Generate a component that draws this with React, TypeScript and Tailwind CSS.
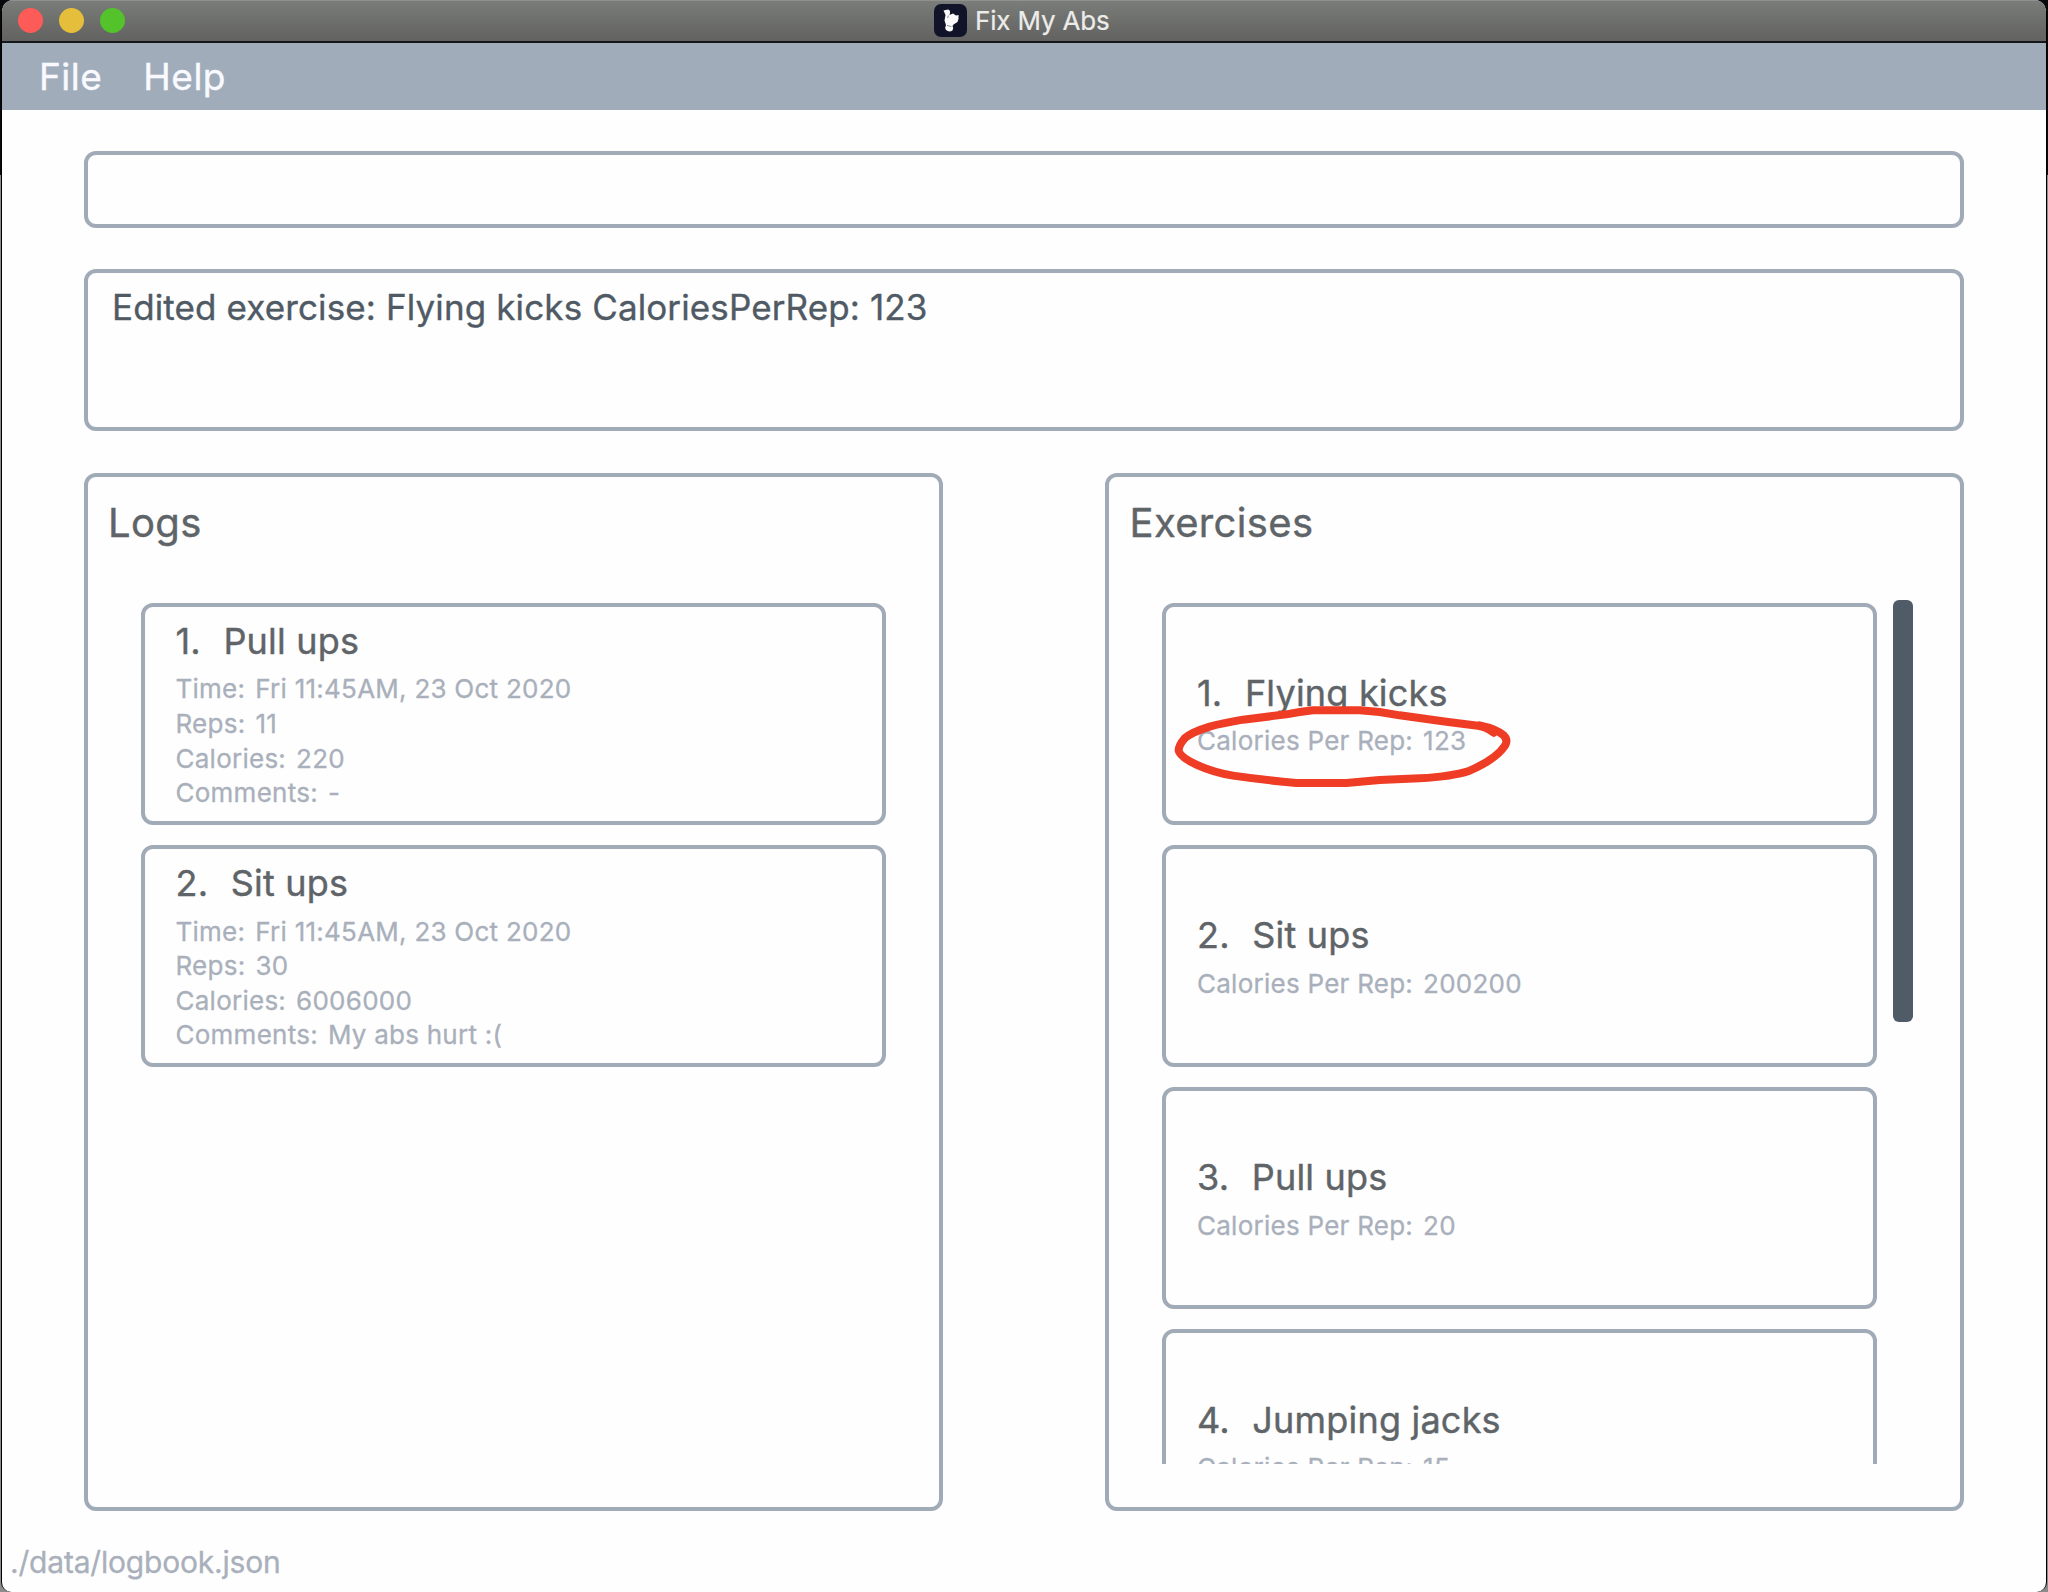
const logs = [
  {
    name: "Pull ups",
    details: [
      ["Time:", "Fri 11:45AM, 23 Oct 2020"],
      ["Reps:", "11"],
      ["Calories:", "220"],
      ["Comments:", "-"],
    ],
  },
  {
    name: "Sit ups",
    details: [
      ["Time:", "Fri 11:45AM, 23 Oct 2020"],
      ["Reps:", "30"],
      ["Calories:", "6006000"],
      ["Comments:", "My abs hurt :("],
    ],
  },
];

const exercises = [
  { name: "Flying kicks", details: [["Calories Per Rep:", "123"]] },
  { name: "Sit ups", details: [["Calories Per Rep:", "200200"]] },
  { name: "Pull ups", details: [["Calories Per Rep:", "20"]] },
  { name: "Jumping jacks", details: [["Calories Per Rep:", "15"]] },
];

function Card({ index, name, details }: { index: number; name: string; details: string[][] }) {
  return (
    <div className="mb-[20.33px] flex h-[222px] shrink-0 flex-col justify-center rounded-[12px] border-4 border-[#a0abb7] pt-[2.5px] pl-[31px] whitespace-nowrap">
      <div className="mb-[9.5px] flex h-[44px] gap-[22.5px] text-[36px] leading-[44px] tracking-[0.2px] text-[#5f6468] [-webkit-text-stroke:0.4px]">
        <span>{index}.</span>
        <span>{name}</span>
      </div>
      {details.map(([label, value]) => (
        <div key={label} className="flex gap-[10px] text-[26px] leading-[34.6px] tracking-[0.25px] text-[#a9b0bb] [-webkit-text-stroke:0.3px]">
          <span>{label}</span>
          <span>{value}</span>
        </div>
      ))}
    </div>
  );
}

/* Hand-drawn loop around the first exercise's calories */
function RedLoop() {
  return (
    <svg className="overflow-visible" width="340" height="83.33" viewBox="220 700 1020 250" fill="none">
      <path
        d="M1182 786 Q1160 768 1135 765 L1040 753 L900 734 Q840 722 780 719 L640 719 Q600 724 560 731 L430 747 Q370 757 330 768 Q275 785 255 803 Q236 825 237 840 Q240 858 290 882 Q340 905 400 915 Q490 928 590 937 L740 937 L840 928 L960 923 Q1060 917 1110 900 Q1190 865 1216 825 Q1226 808 1212 794 Q1190 774 1140 764"
        stroke="#ee3c25"
        strokeWidth="24"
        strokeLinecap="round"
        strokeLinejoin="round"
      />
    </svg>
  );
}

export default function App() {
  return (
    <div className="h-[1592px] w-[2048px] overflow-hidden bg-[linear-gradient(#08090c_175px,#8c8c8c_175px)] px-px font-['Inter',sans-serif]">
      <div className="flex h-[1592px] flex-col overflow-hidden rounded-t-[12px] rounded-b-[10px] border-x border-black bg-[#fefefe]">
        <div className="flex h-[43px] shrink-0 items-center border-b-2 border-[#16171c] bg-linear-to-b from-[#7a7d79] to-[#626260] shadow-[inset_0_1px_0_#8f918e]">
          <div className="ml-[16px] flex gap-[16px]">
            <span className="size-[25px] rounded-full bg-[#fc5b57]" />
            <span className="size-[25px] rounded-full bg-[#e5bf3c]" />
            <span className="size-[25px] rounded-full bg-[#53c22b]" />
          </div>
          <div className="ml-[809px] flex items-center gap-[8px]">
            <svg width="33" height="33" viewBox="0 0 33 33">
              <rect width="33" height="33" rx="7" fill="#111428" />
              <path
                d="M9.5 6.5 L14 5.5 Q16.5 6 16 9 L15.5 11 L19 9.5 L22 11.5 L24.5 11 Q25 15 23.5 18 L19.5 20.5 L18.5 22 Q20 24 18.5 26.5 Q15 28.5 12 26 Q10.5 23.5 12 21 L10.5 16.5 L11.5 11 Z"
                fill="#fafafa"
              />
              <path d="M13 21.5 L17.5 22.5 M14.5 11.5 L13.5 14" stroke="#8b8d99" strokeWidth="1" />
            </svg>
            <span className="pt-px text-[26px] leading-[40px] tracking-[-0.17px] whitespace-nowrap text-[#ececea] [-webkit-text-stroke:0.2px]">Fix My Abs</span>
          </div>
        </div>

        <div className="flex h-[66.5px] shrink-0 items-center gap-[41px] bg-[#a0acba] pl-[37px] text-[37px] tracking-[0.5px] text-[#f8faff] [-webkit-text-stroke:0.4px]">
          <span>File</span>
          <span>Help</span>
        </div>

        <div className="flex flex-col px-[82px] pt-[41.5px]">
          <div className="h-[77px] rounded-[12px] border-4 border-[#a0abb7]" />
          <div className="mt-[41px] h-[162px] rounded-[12px] border-4 border-[#a0abb7] pt-[12px] pl-[24px] text-[35px] leading-[44px] tracking-[0.12px] whitespace-nowrap text-[#4f5a65] [-webkit-text-stroke:0.35px]">
            Edited exercise: Flying kicks CaloriesPerRep: 123
          </div>

          <div className="mt-[41.5px] flex h-[1038px] justify-between">
            <section className="flex w-[858.5px] flex-col rounded-[12px] border-4 border-[#a0abb7] pt-[22px]">
              <h2 className="pl-[20px] text-[40px] leading-[48px] tracking-[0.35px] text-[#5f6468] [-webkit-text-stroke:0.4px]">Logs</h2>
              <div className="mt-[56px] flex flex-col pr-[53px] pl-[52.5px]">
                {logs.map((l, i) => (
                  <Card key={l.name} index={i + 1} {...l} />
                ))}
              </div>
            </section>

            <section className="flex w-[859px] flex-col rounded-[12px] border-4 border-[#a0abb7] pt-[22px]">
              <h2 className="pl-[20.5px] text-[40px] leading-[48px] tracking-[0.35px] text-[#5f6468] [-webkit-text-stroke:0.4px]">Exercises</h2>
              <div className="mt-[53px] flex pl-[53px]">
                <div className="relative mt-[3px] h-[861px] w-[714.5px]">
                  <div className="flex h-full flex-col overflow-hidden">
                    {exercises.map((e, i) => (
                      <Card key={e.name} index={i + 1} {...e} />
                    ))}
                  </div>
                  <div className="absolute top-[101px] left-[11px]">
                    <RedLoop />
                  </div>
                </div>
                <div className="ml-[16px] h-[422px] w-[20px] rounded-[6px] bg-[#4f5b66]" />
              </div>
            </section>
          </div>
        </div>

        <footer className="mt-[31px] pl-[8px] text-[30px] leading-[40px] tracking-[-0.19px] text-[#a9b0bb] [-webkit-text-stroke:0.3px]">./data/logbook.json</footer>
      </div>
    </div>
  );
}
